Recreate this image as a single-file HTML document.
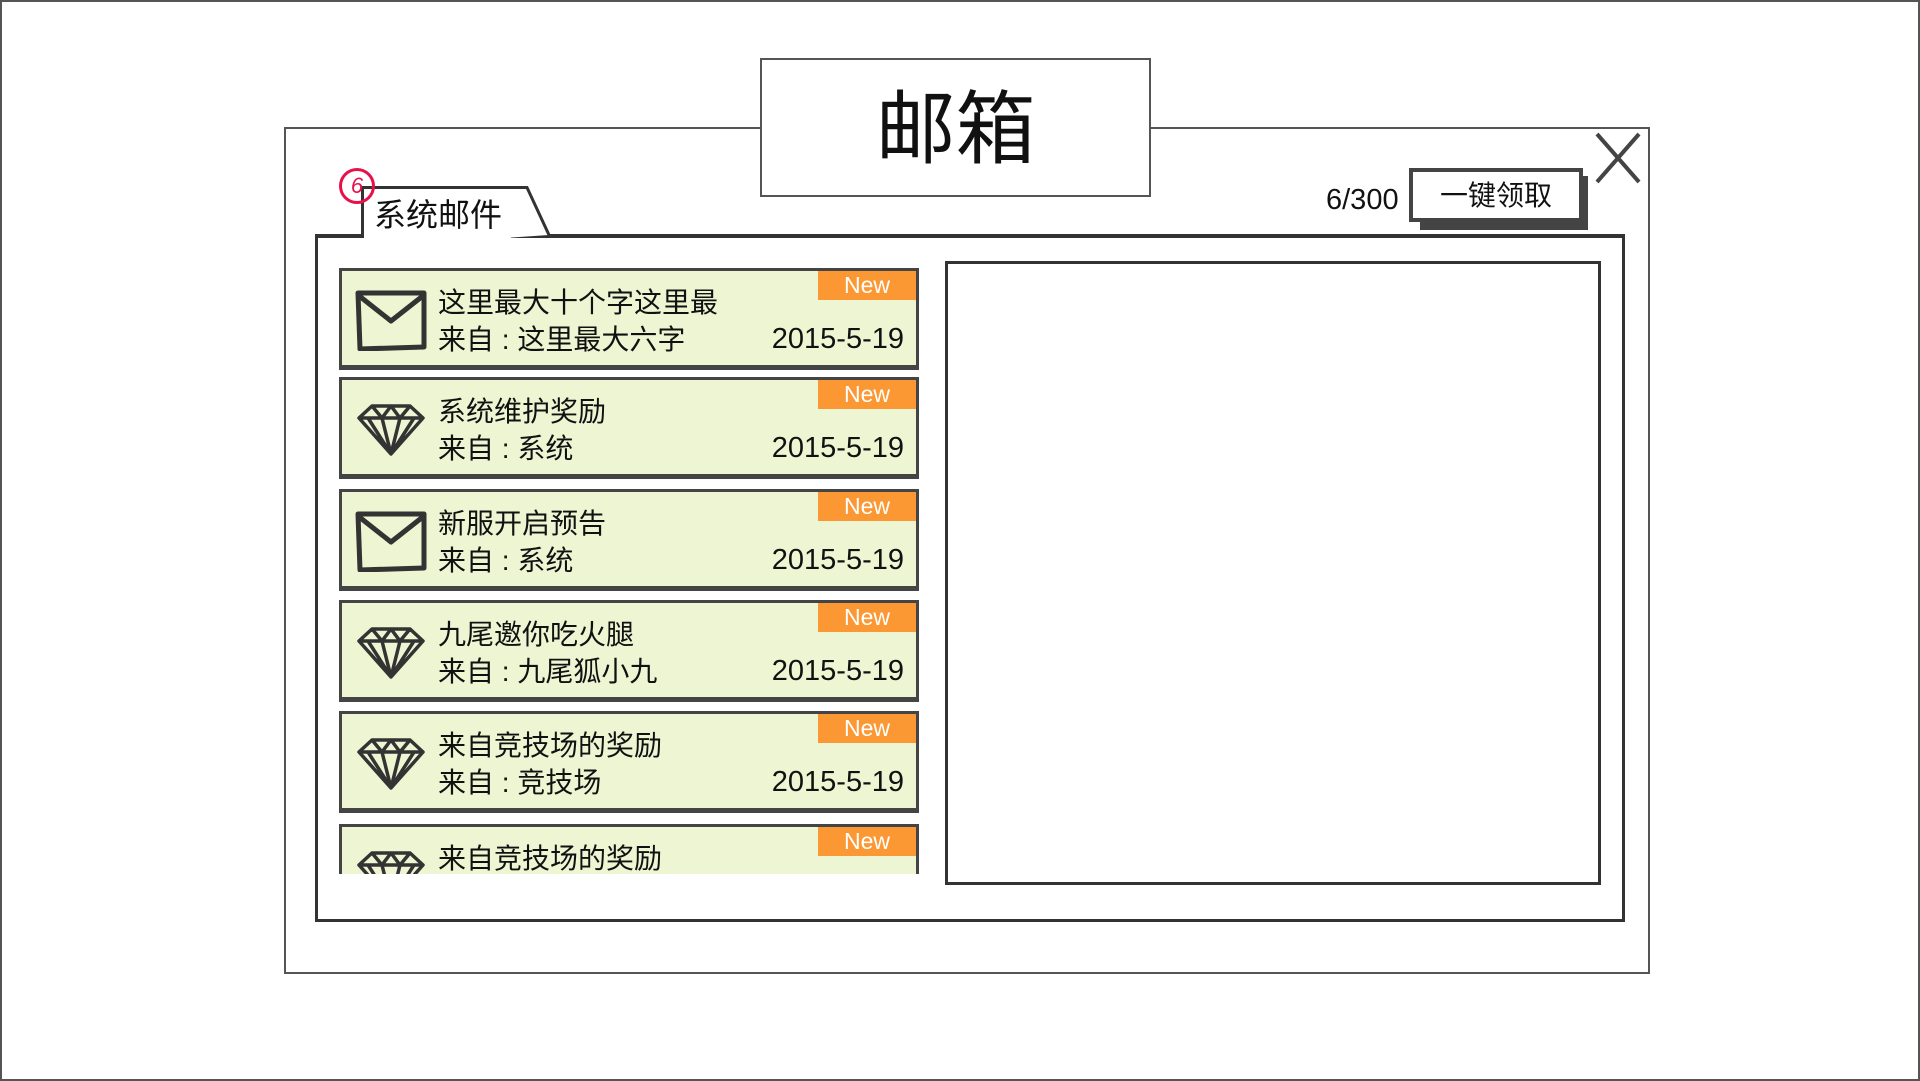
<!DOCTYPE html>
<html><head><meta charset="utf-8"><style>
*{margin:0;padding:0;box-sizing:border-box}
body{width:1920px;height:1081px;background:#fff;position:relative;overflow:hidden;font-family:"Liberation Sans","Noto Sans CJK SC",sans-serif;color:#111}
.abs{position:absolute}
#frame{left:0;top:0;width:1920px;height:1081px;border:2px solid #555}
#win{left:284px;top:127px;width:1366px;height:847px;border:2px solid #555}
#title{left:760px;top:58px;width:391px;height:139px;border:2px solid #555;background:#fff;font-size:80px;text-align:center;line-height:140px;font-weight:normal}
#panel{left:315px;top:234px;width:1310px;height:688px;border:3px solid #333;border-top-width:4px}
#tab{left:361px;top:186px;width:150px;height:52px;background:#fff;border:3px solid #333;border-bottom:none;border-right:none}
#tabr{left:505px;top:186px;width:50px;height:52px}
#tabtxt{left:374px;top:190px;font-size:32px}
#badge{left:339px;top:168px;width:36px;height:36px;border:3px solid #e8104a;border-radius:50%;color:#e8104a;font-size:22px;text-align:center;line-height:30px;font-style:italic}
#cnt{left:1326px;top:184px;font-size:29px}
#btnsh{left:1420px;top:176px;width:168px;height:54px;background:#444}
#btn{left:1409px;top:168px;width:174px;height:54px;background:#fff;border:4px solid #444;font-size:28px;text-align:center;line-height:48px}
#right{left:945px;top:261px;width:656px;height:624px;border:3px solid #333}
.item{position:absolute;left:339px;width:580px;height:102px;background:#eef5d3;border:3px solid #444;border-bottom-width:5px;overflow:hidden}
.new{position:absolute;right:0;top:0;width:98px;height:29px;background:#fb9834;color:#fff;font-size:23px;text-align:center;line-height:29px}
.ic{position:absolute;left:12px;top:18px}
.l1{position:absolute;left:96px;top:10px;font-size:28px}
.l2{position:absolute;left:96px;top:47px;font-size:28px}
.dt{position:absolute;right:12px;top:52px;font-size:29px}
#clip{left:339px;top:260px;width:582px;height:614px;overflow:hidden}
</style></head><body>
<div class="abs" id="frame"></div>
<div class="abs" id="win"></div>
<div class="abs" id="panel"></div>
<div class="abs" id="tab"></div>
<svg class="abs" id="tabr" viewBox="0 0 50 52"><polygon points="0,0 22,0 44,49 0,52" fill="#fff"/><polyline points="0,1.5 22,1.5 44,49" fill="none" stroke="#333" stroke-width="3"/></svg>
<div class="abs" id="tabtxt">系统邮件</div>
<div class="abs" id="badge">6</div>
<div class="abs" id="title">邮箱</div>
<svg class="abs" style="left:1594px;top:131px" width="48" height="54"><path d="M3 3 L45 51 M45 3 L3 51" stroke="#444" stroke-width="4"/></svg>
<div class="abs" id="cnt">6/300</div>
<div class="abs" id="btnsh"></div>
<div class="abs" id="btn">一键领取</div>
<div class="abs" id="right"></div>
<div class="abs" id="clip">
<div class="item" style="left:0;top:8px"><div class="new">New</div>
<svg class="ic" width="74" height="62"><path d="M4 4 L70 4 L70 58 L6 60 Z M4 6 L37 32 L70 6" fill="none" stroke="#333" stroke-width="5" stroke-linejoin="round"/></svg>
<div class="l1">这里最大十个字这里最</div><div class="l2">来自 : 这里最大六字</div><div class="dt">2015-5-19</div></div>
<div class="item" style="left:0;top:117px"><div class="new">New</div>
<svg class="ic" width="74" height="62"><path d="M5 20 L18 8 L56 8 L69 20 L37 56 Z M5 20 L69 20 M18 8 L28 20 L37 8 L46 20 L56 8 M28 20 L37 56 M46 20 L37 56 M14 20 L37 56 M60 20 L37 56" fill="none" stroke="#333" stroke-width="3.5" stroke-linejoin="round"/></svg>
<div class="l1">系统维护奖励</div><div class="l2">来自 : 系统</div><div class="dt">2015-5-19</div></div>
<div class="item" style="left:0;top:229px"><div class="new">New</div>
<svg class="ic" width="74" height="62"><path d="M4 4 L70 4 L70 58 L6 60 Z M4 6 L37 32 L70 6" fill="none" stroke="#333" stroke-width="5" stroke-linejoin="round"/></svg>
<div class="l1">新服开启预告</div><div class="l2">来自 : 系统</div><div class="dt">2015-5-19</div></div>
<div class="item" style="left:0;top:340px"><div class="new">New</div>
<svg class="ic" width="74" height="62"><path d="M5 20 L18 8 L56 8 L69 20 L37 56 Z M5 20 L69 20 M18 8 L28 20 L37 8 L46 20 L56 8 M28 20 L37 56 M46 20 L37 56 M14 20 L37 56 M60 20 L37 56" fill="none" stroke="#333" stroke-width="3.5" stroke-linejoin="round"/></svg>
<div class="l1">九尾邀你吃火腿</div><div class="l2">来自 : 九尾狐小九</div><div class="dt">2015-5-19</div></div>
<div class="item" style="left:0;top:451px"><div class="new">New</div>
<svg class="ic" width="74" height="62"><path d="M5 20 L18 8 L56 8 L69 20 L37 56 Z M5 20 L69 20 M18 8 L28 20 L37 8 L46 20 L56 8 M28 20 L37 56 M46 20 L37 56 M14 20 L37 56 M60 20 L37 56" fill="none" stroke="#333" stroke-width="3.5" stroke-linejoin="round"/></svg>
<div class="l1">来自竞技场的奖励</div><div class="l2">来自 : 竞技场</div><div class="dt">2015-5-19</div></div>
<div class="item" style="left:0;top:564px"><div class="new">New</div>
<svg class="ic" width="74" height="62"><path d="M5 20 L18 8 L56 8 L69 20 L37 56 Z M5 20 L69 20 M18 8 L28 20 L37 8 L46 20 L56 8 M28 20 L37 56 M46 20 L37 56 M14 20 L37 56 M60 20 L37 56" fill="none" stroke="#333" stroke-width="3.5" stroke-linejoin="round"/></svg>
<div class="l1">来自竞技场的奖励</div><div class="l2">来自 : 竞技场</div><div class="dt">2015-5-19</div></div>
</div>
</body></html>
